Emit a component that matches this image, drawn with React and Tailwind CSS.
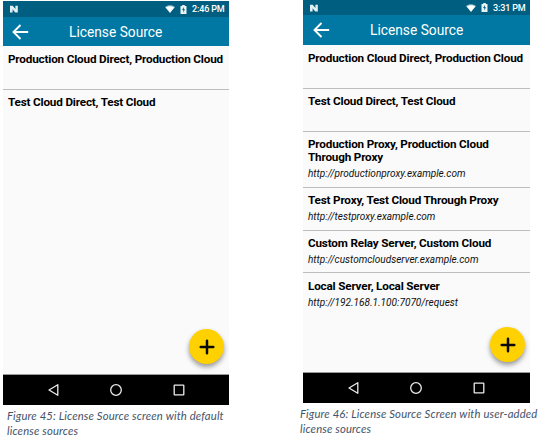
const FONT = "font-['Roboto',sans-serif]";

function StatusBar({ time, className }) {
  return (
    <div className={`flex shrink-0 items-center bg-[#005f80] text-white ${className}`}>
      <svg className="ml-[6px]" width="10" height="8" viewBox="0 0 10 8">
        <path d="M1 7.500V.7h2.700l2.700 3.300V.7h2.400v6.800H6.200L3.600 4.200v3.300z" fill="#e4eff3" />
      </svg>
      <svg className="ml-auto mr-[5px]" width="10" height="8" viewBox="0 0 10 8">
        <path d="M0 2C3-.4 7-.4 10 2L5 8z" fill="#8fbccb" />
        <path d="M.8 2.500C3.300.9 6.700.9 9.200 2.500L5 7.800z" fill="#fff" />
      </svg>
      <svg className="mr-[5px]" width="7" height="9" viewBox="0 0 7 9">
        <path d="M2.200 0h2.600v.9H6.500V9H.5V.9h1.700z" fill="#e9f3f6" />
        <path d="M4 1.900L2 5h1.300v2.400L5 4.300H3.800z" fill="#005f80" />
      </svg>
      <span className="mr-[4px] w-[33px] whitespace-nowrap pt-[1px] text-[9px] font-medium leading-none tracking-[-0.15px]">
        {time}
      </span>
    </div>
  );
}

function Toolbar({ className }) {
  return (
    <div className={`flex shrink-0 items-center bg-[#0078a3] text-white ${className}`}>
      <svg width="17" height="16" viewBox="0 0 17 16" fill="none" stroke="#fff" strokeWidth="1.900">
        <path d="M16.200 8H2M8.500 1L1.500 8l7 7" />
      </svg>
      <span className="ml-[40px] whitespace-nowrap pt-[2px] text-[13.750px] leading-none">License Source</span>
    </div>
  );
}

function Row({ title, url, className }) {
  return (
    <div className={`shrink-0 pl-[5px] ${className}`}>
      <div className="whitespace-pre text-[11.700px] font-bold leading-[13px] tracking-[-0.17px] text-black">
        {title}
      </div>
      {url && (
        <div className="mt-[4px] whitespace-nowrap text-[10.050px] italic leading-[11px] text-[#111]">{url}</div>
      )}
    </div>
  );
}

function Fab({ className }) {
  return (
    <button
      aria-label="Add"
      className={`absolute flex size-[35px] items-center justify-center rounded-full bg-[#ffd100] shadow-[0_3px_5px_rgba(0,0,0,0.4)] ${className}`}
    >
      <svg width="16" height="16" viewBox="0 0 16 16" stroke="#0a0a0a" strokeWidth="2.500" strokeLinecap="round">
        <path d="M8 1.700v12.600M1.700 8h12.600" />
      </svg>
    </button>
  );
}

function NavBar({ className }) {
  return (
    <div className={`shrink-0 bg-black ${className}`}>
      <svg width="226" height="30" viewBox="0 0 226 30" fill="none" stroke="#ececec" strokeWidth="1.300">
        <path d="M54.800 9.700v10.600L46 15z" strokeLinejoin="round" />
        <circle cx="113" cy="15" r="5.300" />
        <rect x="171.200" y="10.200" width="9.600" height="9.600" rx=".4" />
      </svg>
    </div>
  );
}

const caption =
  "whitespace-pre font-['Lato',sans-serif] text-[11.300px] italic leading-[15px] tracking-[0.14px] text-[#44546a]";

export default function App() {
  return (
    <div className={`flex h-[447px] w-[548px] overflow-hidden bg-white ${FONT}`}>
      <div className="w-[300px] shrink-0 pl-[3px] pt-[1px]">
        <div className="relative flex h-[404px] w-[226px] flex-col bg-[#fafafa]">
          <StatusBar time="2:46 PM" className="h-[16px]" />
          <Toolbar className="h-[29px] pl-[9px]" />
          <Row
            title="Production Cloud Direct, Production Cloud"
            className="h-[44px] border-b border-[#bdbdbd] pt-[7px]"
          />
          <Row title="Test Cloud Direct, Test Cloud" className="pt-[6px]" />
          <div className="flex-1" />
          <NavBar className="h-[31px] border-t border-[#9a9a9a]" />
          <Fab className="left-[186px] top-[328px]" />
        </div>
        <div className={`ml-[4px] mt-[3px] ${caption}`}>{"Figure 45: License Source screen with default\nlicense sources"}</div>
      </div>
      <div className="shrink-0">
        <div className="relative ml-[3px] flex h-[403px] w-[227px] flex-col bg-[#fafafa]">
          <StatusBar time="3:31 PM" className="h-[15px]" />
          <Toolbar className="h-[30px] pl-[10px]" />
          <Row
            title="Production Cloud Direct, Production Cloud"
            className="h-[44px] border-b border-[#bdbdbd] pt-[7px]"
          />
          <Row title="Test Cloud Direct, Test Cloud" className="h-[43px] border-b border-[#bdbdbd] pt-[6px]" />
          <Row
            title={"Production Proxy, Production Cloud\nThrough Proxy"}
            url="http://productionproxy.example.com"
            className="h-[56px] border-b border-[#bdbdbd] pt-[6px]"
          />
          <Row
            title="Test Proxy, Test Cloud Through Proxy"
            url="http://testproxy.example.com"
            className="h-[43px] border-b border-[#bdbdbd] pt-[6px]"
          />
          <Row
            title="Custom Relay Server, Custom Cloud"
            url="http://customcloudserver.example.com"
            className="h-[42px] border-b border-[#bdbdbd] pt-[6px]"
          />
          <Row title="Local Server, Local Server" url="http://192.168.1.100:7070/request" className="pt-[7px]" />
          <div className="flex-1" />
          <NavBar className="h-[31px] border-t border-[#9a9a9a]" />
          <Fab className="left-[187px] top-[327px]" />
        </div>
        <div className={`mt-[3px] ${caption}`}>{"Figure 46: License Source Screen with user-added\nlicense sources"}</div>
      </div>
    </div>
  );
}
